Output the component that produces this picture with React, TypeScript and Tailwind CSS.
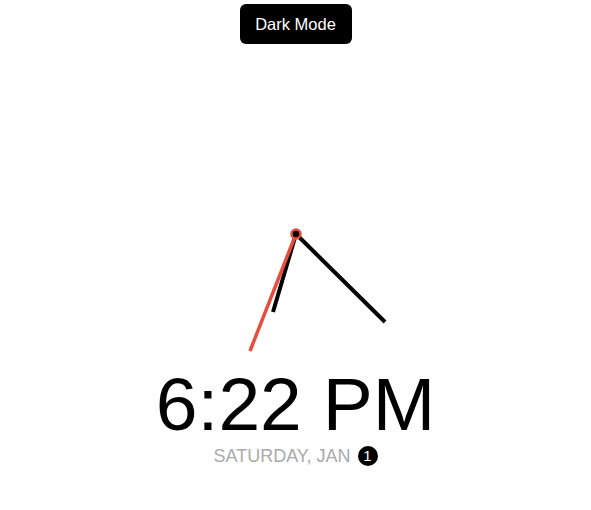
import { useState } from "react";

export default function App() {
  const [dark, setDark] = useState(false);

  // clock face center sits at (130,130) inside the svg
  return (
    <main
      className={`min-h-[510px] flex flex-col items-center ${dark ? "bg-black text-white" : "bg-white text-black"}`}
      style={{ fontFamily: '"Liberation Sans", Arial, sans-serif' }}
    >
      <button
        onClick={() => setDark(!dark)}
        className="mt-1 h-10 w-[112px] rounded-md bg-black text-white text-[16.5px]"
      >
        Dark Mode
      </button>

      <svg width="260" height="263" viewBox="0 0 260 263" className="mt-[60px] block">
        <line x1="130" y1="130" x2="107" y2="208" stroke="currentColor" strokeWidth="4" />
        <line x1="130" y1="130" x2="219" y2="218" stroke="currentColor" strokeWidth="4" />
        <line x1="130" y1="130" x2="84" y2="247" stroke="#e74c3c" strokeWidth="3.5" />
        <circle cx="130" cy="130" r="4.5" fill="#000" stroke="#e74c3c" strokeWidth="2.5" />
      </svg>

      <div className="text-[75px] leading-none">6:22 PM</div>

      <div className="mt-px flex items-center gap-[7px] h-[26px] text-[18px] text-[#aaaaaa] uppercase">
        <span>Saturday, Jan</span>
        <span className="w-5 h-5 rounded-full bg-black text-white flex items-center justify-center text-[15px]">1</span>
      </div>
    </main>
  );
}
